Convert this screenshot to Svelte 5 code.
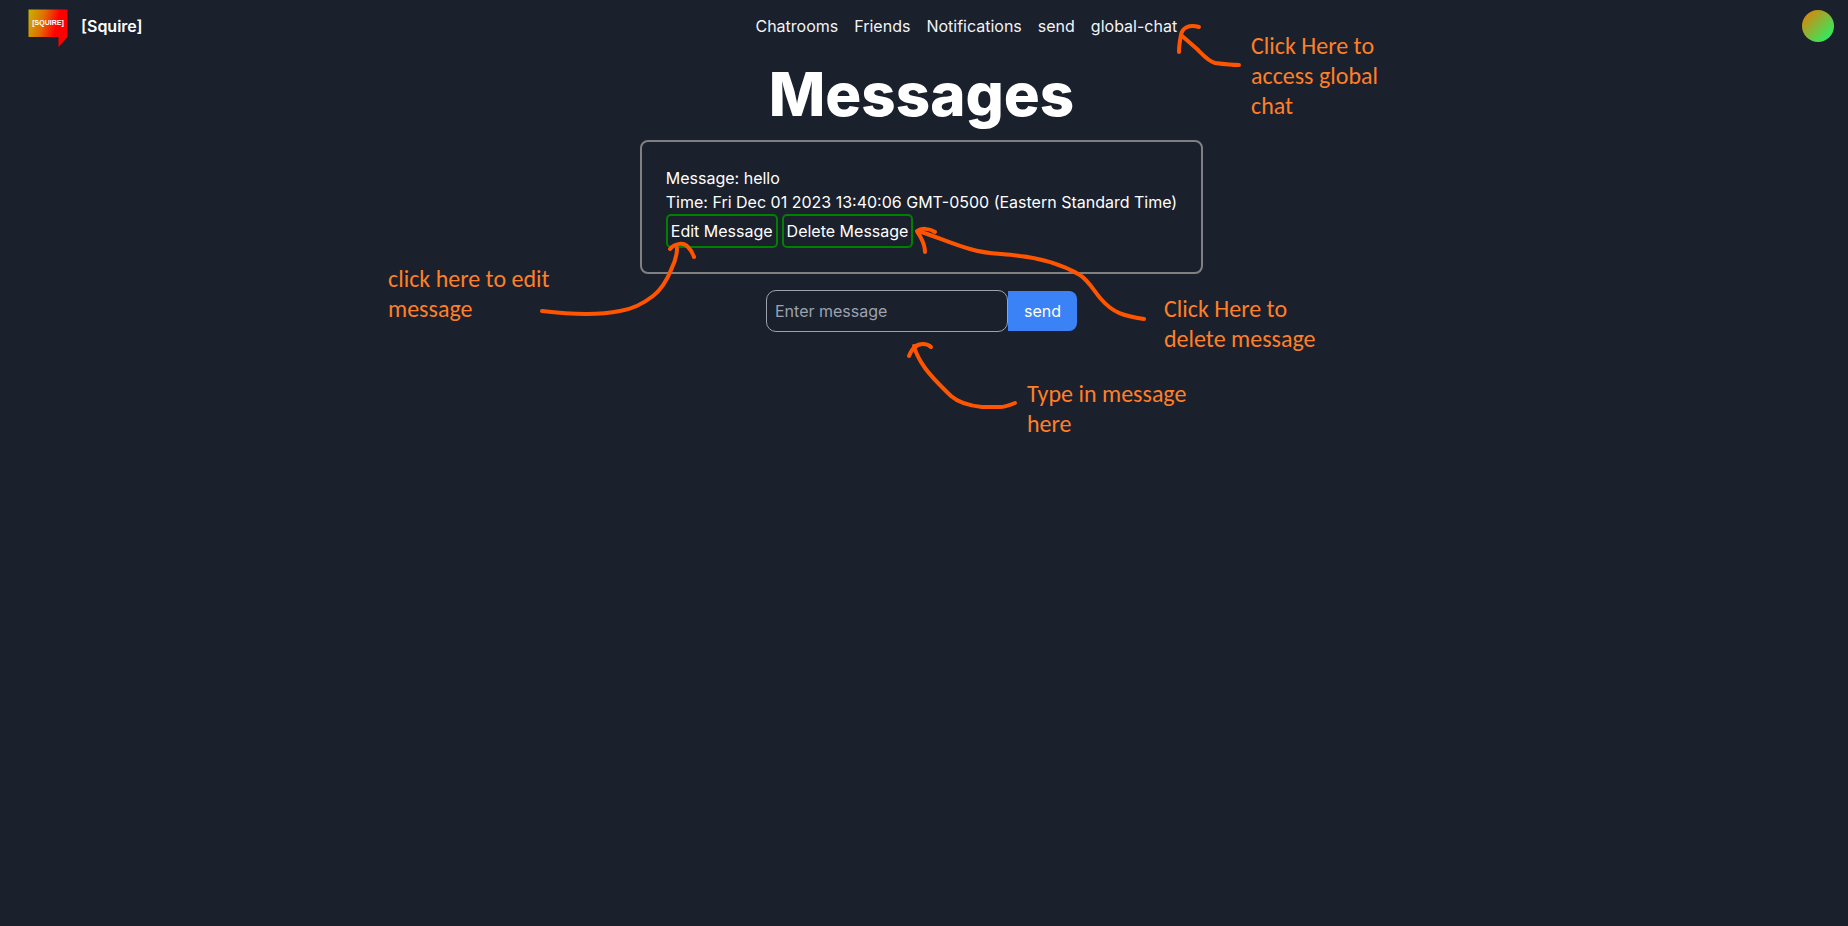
<script lang="ts">
  const links = ['Chatrooms', 'Friends', 'Notifications', 'send', 'global-chat'];
  const notes = [
    { name: 'global', lines: ['Click Here to', 'access global', 'chat'] },
    { name: 'edit', lines: ['click here to edit', 'message'] },
    { name: 'delete', lines: ['Click Here to', 'delete message'] },
    { name: 'type', lines: ['Type in message', 'here'] }
  ];
  let draft = $state('');
</script>

<div class="page">
  <header>
    <a class="brand" href="#home">
      <svg class="logo" viewBox="0 0 40 39" aria-hidden="true">
        <defs>
          <linearGradient id="flag" x1="0" y1="0" x2="1" y2="0.25">
            <stop offset="0" stop-color="#c8b400" />
            <stop offset="0.4" stop-color="#e07000" />
            <stop offset="0.78" stop-color="#ff0000" />
          </linearGradient>
        </defs>
        <path d="M0.5 0.5H39.5V28L30.5 38V28H0.5Z" fill="url(#flag)" />
        <text x="20" y="16" text-anchor="middle">[SQUIRE]</text>
      </svg>
      <span>[Squire]</span>
    </a>
    <nav>
      {#each links as link}
        <a href={'#' + link}>{link}</a>
      {/each}
    </nav>
    <button class="avatar" aria-label="Account"></button>
  </header>

  <main>
    <h1>Messages</h1>
    <article>
      <p>Message: hello</p>
      <p>Time: Fri Dec 01 2023 13:40:06 GMT-0500 (Eastern Standard Time)</p>
      <div class="actions">
        <button>Edit Message</button>
        <button>Delete Message</button>
      </div>
    </article>
    <form onsubmit={(e) => e.preventDefault()}>
      <input type="text" aria-label="Enter message" placeholder="Enter message" bind:value={draft} />
      <button type="submit">send</button>
    </form>
  </main>

  <div class="overlay">
    <svg viewBox="384 0 1016 450" aria-hidden="true">
      <path d="M1199 27C1189 24 1182 28 1181 35C1180 40 1179 46 1179 52M1181 35L1197 49C1203 55 1208 61 1215 63C1223 64 1231 65 1239 65" />
      <path d="M670 249C675 243 684 242 688 247C691 250 693 254 694 257M677 248C677 256 675 262 671 270C667 280 662 289 653 296C644 303 633 309 620 311C596 316 567 314 542 311" />
      <path d="M935 232C929 228 921 228 917 231C920 237 925 242 925 252M918 231C935 236 954 245 970 249C990 255 1001 253 1020 256C1040 258 1063 265 1080 275C1089 281 1094 291 1101 299C1113 313 1124 316 1144 319" />
      <path d="M909 356C912 348 916 344 923 344C927 344 929 345 931 347M914 346C916 354 920 361 925 368C933 379 943 388 951 396C959 403 972 406 982 407H1000C1006 407 1010 405 1015 403" />
    </svg>
    {#each notes as note}
      <p class="note {note.name}">
        {#each note.lines as line}<span>{line}</span>{/each}
      </p>
    {/each}
  </div>
</div>

<style>
  :global(body) {
    background: #1a202c;
  }
  .page {
    position: relative;
    min-height: 100vh;
    overflow: hidden;
    background: #1a202c;
    color: #fff;
    font: 16px/24px Inter, sans-serif;
  }
  * {
    box-sizing: border-box;
  }
  p,
  h1 {
    margin: 0;
  }
  a {
    color: inherit;
    text-decoration: none;
  }
  button,
  input {
    font: inherit;
    color: inherit;
    background: transparent;
  }
  header {
    display: flex;
    justify-content: space-between;
    align-items: center;
    height: 52px;
    padding: 0 14px 0 28px;
  }
  .brand {
    display: flex;
    align-items: center;
    gap: 13px;
    font-weight: 600;
  }
  .logo {
    width: 40px;
    height: 39px;
    margin-top: 4px;
  }
  .logo text {
    font: bold 7px 'Liberation Sans', sans-serif;
    fill: #fff;
  }
  nav {
    display: flex;
    gap: 16px;
    color: #f3f4f6;
  }
  .avatar {
    width: 32px;
    height: 32px;
    margin-left: 12px;
    padding: 0;
    border: 0;
    border-radius: 50%;
    background: linear-gradient(135deg, #f07800, #10ff70);
  }
  main {
    display: flex;
    flex-direction: column;
    align-items: center;
    padding: 12px 5px 0 0;
  }
  h1 {
    font-size: 60px;
    line-height: 60px;
    font-weight: 800;
  }
  article {
    margin-top: 16px;
    padding: 24px;
    border: 2px solid #808080;
    border-radius: 8px;
  }
  .actions {
    display: flex;
    gap: 4px;
  }
  .actions button {
    padding: 3px;
    border: 2px solid #008000;
    border-radius: 5px;
  }
  form {
    display: flex;
    align-items: center;
    margin-top: 16px;
  }
  input {
    width: 242px;
    padding: 8px;
    border: 1px solid #9ca3af;
    border-radius: 10px;
    line-height: 24px;
    height: 42px;
  }
  input::placeholder {
    color: #9ca3af;
    opacity: 1;
  }
  form button {
    padding: 8px 16px;
    border: 0;
    border-radius: 0 8px 8px 0;
    background: #3b82f6;
  }
  .overlay {
    position: absolute;
    top: 0;
    left: 50%;
    width: 1016px;
    height: 450px;
    margin-left: -540px;
    pointer-events: none;
  }
  .overlay svg {
    display: block;
    width: 100%;
    height: 100%;
    fill: none;
    stroke: #ff5500;
    stroke-width: 4;
    stroke-linecap: round;
    stroke-linejoin: round;
  }
  .note {
    position: absolute;
    color: #ff7f27;
    font: 24px/30px Carlito, Lato, sans-serif;
  }
  .note span {
    display: block;
    white-space: nowrap;
  }
  .global {
    left: 867px;
    top: 31px;
  }
  .edit {
    left: 4px;
    top: 264px;
  }
  .delete {
    left: 780px;
    top: 294px;
  }
  .type {
    left: 643px;
    top: 379px;
  }
</style>
